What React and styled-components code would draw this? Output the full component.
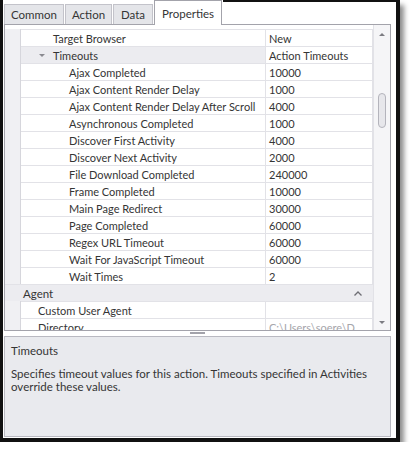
import React from "react";
import styled, { createGlobalStyle, css } from "styled-components";

const colors = {
  ink: "#353535",
  muted: "#a6a6ab",
  border: "#a3a3ab",
  line: "#e2e2e7",
  gutter: "#f0f0f3",
  group: "#ececf0",
  panel: "#e9eaee",
  tab: "#e4e5e9",
  tabBorder: "#c3c3ca",
  frame: "#111",
};

const GlobalStyle = createGlobalStyle`
  html, body {
    margin: 0;
    background: #fff;
  }
  body {
    font-family: Lato, "Segoe UI", "Liberation Sans", sans-serif;
    font-size: 11.5px;
    color: ${colors.ink};
  }
`;

const Frame = styled.div`
  box-sizing: border-box;
  width: 400px;
  height: 442px;
  border-left: 3px solid ${colors.frame};
  border-right: 4px solid ${colors.frame};
  border-bottom: 4px solid ${colors.frame};
  padding: 0 5px 1px 1px;
  box-shadow: 4px 5px 5px rgba(0, 0, 0, 0.45);
  display: flex;
  flex-direction: column;
  background: #fff;
`;

const TabStrip = styled.div`
  display: flex;
  height: 24px;
  position: relative;
  z-index: 1;
`;

const Tab = styled.div`
  box-sizing: border-box;
  width: ${(p) => p.w}px;
  height: 20px;
  margin-top: 4px;
  display: flex;
  align-items: center;
  justify-content: center;
  background: ${colors.tab};
  border: 1px solid ${colors.tabBorder};
  border-bottom: none;
  margin-right: 1px;

  ${(p) =>
    p.active &&
    css`
      height: 25px;
      margin-top: 0;
      background: #fff;
      border-color: ${colors.border};
      padding-top: 1px;
    `}
`;

const TopEdge = styled.div`
  flex: 1;
  align-self: flex-start;
  margin-right: -5px;
  border-top: 2px solid ${colors.frame};
`;

const Grid = styled.div`
  box-sizing: border-box;
  height: 307px;
  border: 1px solid ${colors.border};
  display: flex;
`;

const Rows = styled.div`
  flex: 1;
  overflow: hidden;
  padding-top: 4px;
  font-size: 11px;
`;

const Row = styled.div`
  display: flex;
  height: 17px;
`;

const Gutter = styled.div`
  width: 15px;
  background: ${colors.gutter};
  border-right: 1px solid #d6d6dc;
`;

const NameCell = styled.div`
  box-sizing: border-box;
  width: 245px;
  display: flex;
  align-items: center;
  padding-left: ${(p) => p.indent}px;
  border-top: 1px solid ${colors.line};
  border-right: 1px solid ${colors.line};
  background: ${(p) => (p.group ? colors.group : "#fff")};
  white-space: nowrap;
  overflow: hidden;
`;

const ValueCell = styled.div`
  box-sizing: border-box;
  width: 107px;
  display: flex;
  align-items: center;
  padding-left: 3px;
  border-top: 1px solid ${colors.line};
  border-right: 1px solid ${colors.line};
  color: ${(p) => (p.muted ? colors.muted : colors.ink)};
  white-space: nowrap;
  overflow: hidden;
`;

const CategoryRow = styled.div`
  box-sizing: border-box;
  height: 17px;
  display: flex;
  align-items: center;
  justify-content: space-between;
  padding: 0 11px 0 18px;
  background: ${colors.group};
  border-top: 1px solid ${colors.line};
  font-size: 11.5px;
`;

const Expander = styled.span`
  width: 0;
  height: 0;
  border-left: 3px solid transparent;
  border-right: 3px solid transparent;
  border-top: 3px solid #8a8a90;
  margin-right: 8px;
`;

const ScrollBar = styled.div`
  width: 17px;
  background: #f5f5f7;
  border-left: 1px solid ${colors.line};
  display: flex;
  flex-direction: column;
  align-items: center;
  justify-content: space-between;
  padding: 8px 0 6px;
  box-sizing: border-box;
`;

const Arrow = styled.span`
  width: 0;
  height: 0;
  border-left: 3px solid transparent;
  border-right: 3px solid transparent;
  ${(p) =>
    p.up
      ? css`border-bottom: 3px solid #7c7c82;`
      : css`border-top: 3px solid #7c7c82;`}
`;

const Track = styled.div`
  flex: 1;
  width: 100%;
  display: flex;
  justify-content: center;
  padding-top: 57px;
`;

const Thumb = styled.div`
  box-sizing: border-box;
  width: 8px;
  height: 35px;
  border: 1px solid #b4b4bc;
  border-radius: 4px;
  background: #e7e7eb;
`;

const Splitter = styled.div`
  height: 5px;
  display: flex;
  justify-content: center;
  align-items: flex-start;
`;

const Grip = styled.div`
  width: 15px;
  height: 2px;
  margin-top: 1px;
  background-image: radial-gradient(circle, #9c9ca4 0.7px, transparent 0.8px);
  background-size: 2px 2px;
`;

const Description = styled.div`
  box-sizing: border-box;
  height: 101px;
  border: 1px solid #b9b9c1;
  background: ${colors.panel};
  padding: 6px 12px 0 6px;
`;

const DescTitle = styled.div`
  line-height: 15px;
`;

const DescText = styled.div`
  margin-top: 9px;
  line-height: 13px;
`;

const tabs = [
  { label: "Common", w: 60 },
  { label: "Action", w: 47 },
  { label: "Data", w: 40 },
  { label: "Properties", w: 68, active: true },
];

const rows = [
  { name: "Target Browser", value: "New", indent: 32 },
  { name: "Timeouts", value: "Action Timeouts", indent: 18, group: true },
  { name: "Ajax Completed", value: "10000", indent: 48 },
  { name: "Ajax Content Render Delay", value: "1000", indent: 48 },
  { name: "Ajax Content Render Delay After Scroll", value: "4000", indent: 48 },
  { name: "Asynchronous Completed", value: "1000", indent: 48 },
  { name: "Discover First Activity", value: "4000", indent: 48 },
  { name: "Discover Next Activity", value: "2000", indent: 48 },
  { name: "File Download Completed", value: "240000", indent: 48 },
  { name: "Frame Completed", value: "10000", indent: 48 },
  { name: "Main Page Redirect", value: "30000", indent: 48 },
  { name: "Page Completed", value: "60000", indent: 48 },
  { name: "Regex URL Timeout", value: "60000", indent: 48 },
  { name: "Wait For JavaScript Timeout", value: "60000", indent: 48 },
  { name: "Wait Times", value: "2", indent: 48 },
  { category: "Agent" },
  { name: "Custom User Agent", value: "", indent: 17 },
  { name: "Directory", value: "C:\\Users\\soere\\D", indent: 17, muted: true },
];

const Chevron = () => (
  <svg width="8" height="5" viewBox="0 0 8 5">
    <polyline points="0.5,4.5 4,1 7.5,4.5" fill="none" stroke="#6e6e74" strokeWidth="1.3" />
  </svg>
);

export default function App() {
  return (
    <>
      <GlobalStyle />
      <Frame>
        <TabStrip>
          {tabs.map((t) => (
            <Tab key={t.label} w={t.w} active={t.active}>
              {t.label}
            </Tab>
          ))}
          <TopEdge />
        </TabStrip>
        <Grid>
          <Rows>
            {rows.map((r, i) =>
              r.category ? (
                <CategoryRow key={i}>
                  <span>{r.category}</span>
                  <Chevron />
                </CategoryRow>
              ) : (
                <Row key={i}>
                  <Gutter />
                  <NameCell indent={r.indent} group={r.group}>
                    {r.group && <Expander />}
                    {r.name}
                  </NameCell>
                  <ValueCell muted={r.muted}>{r.value}</ValueCell>
                </Row>
              )
            )}
          </Rows>
          <ScrollBar>
            <Arrow up />
            <Track>
              <Thumb />
            </Track>
            <Arrow />
          </ScrollBar>
        </Grid>
        <Splitter>
          <Grip />
        </Splitter>
        <Description>
          <DescTitle>Timeouts</DescTitle>
          <DescText>
            Specifies timeout values for this action. Timeouts specified in Activities override these values.
          </DescText>
        </Description>
      </Frame>
    </>
  );
}
